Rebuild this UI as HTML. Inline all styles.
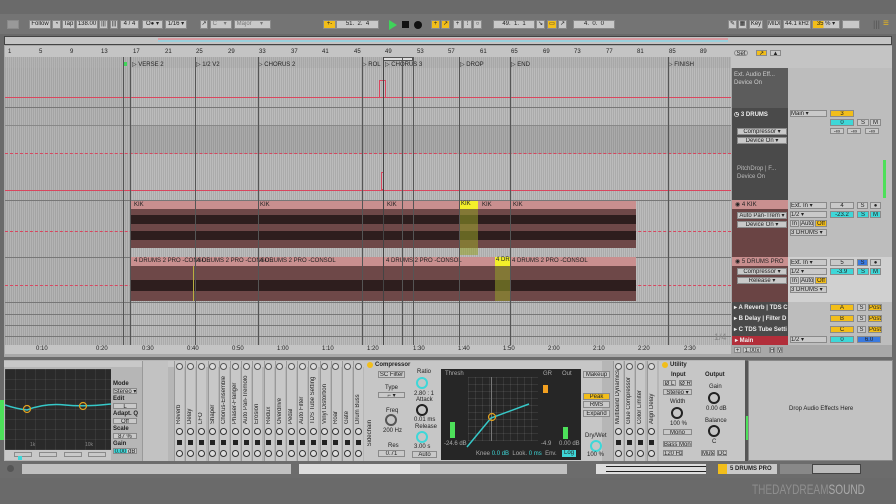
<!DOCTYPE html>
<html><head><meta charset="utf-8"><style>
*{margin:0;padding:0;box-sizing:border-box}
body{width:896px;height:504px;background:#6a6a6a;font-family:"Liberation Sans",sans-serif;font-size:6px;color:#222;position:relative;overflow:hidden}
.a{position:absolute}
.b{position:absolute;background:#c9c9c9;border:1px solid #8a8a8a;font-size:6px;line-height:7px;text-align:center;color:#222;white-space:nowrap;overflow:hidden}
.y{background:#f2be1a}
.c{background:#3ed7d8}
.t{position:absolute;font-size:6px;white-space:nowrap;color:#222}
.vt{position:absolute;writing-mode:vertical-rl;transform:rotate(180deg);font-size:6px;color:#222;white-space:nowrap}
.k{position:absolute;width:12px;height:12px;border-radius:50%;border:2px solid #222}
</style></head><body>
<!-- top toolbar -->
<div class="a" style="left:0;top:14px;width:896px;height:20px;background:#747474"></div>
<div class="b" style="left:7px;top:20px;width:12px;height:9px;background:#999"></div>
<div class="b" style="left:29px;top:20px;width:22px;height:9px">Follow</div>
<div class="b" style="left:52px;top:20px;width:9px;height:9px">◔</div>
<div class="b" style="left:62px;top:20px;width:13px;height:9px">Tap</div>
<div class="b" style="left:76px;top:20px;width:22px;height:9px">138.00</div>
<div class="b" style="left:99px;top:20px;width:9px;height:9px">|||</div>
<div class="b" style="left:110px;top:20px;width:8px;height:9px">|||</div>
<div class="b" style="left:120px;top:20px;width:19px;height:9px">4 / 4</div>
<div class="b" style="left:142px;top:20px;width:21px;height:9px">O● ▾</div>
<div class="b" style="left:165px;top:20px;width:22px;height:9px">1/16 ▾</div>
<div class="b" style="left:200px;top:20px;width:8px;height:9px">↗</div>
<div class="b" style="left:210px;top:20px;width:22px;height:9px;text-align:left;color:#777">&nbsp;C &nbsp;&nbsp;&nbsp;▾</div>
<div class="b" style="left:234px;top:20px;width:37px;height:9px;text-align:left;color:#777">&nbsp;Major &nbsp;&nbsp;&nbsp;&nbsp;▾</div>
<div class="b y" style="left:323px;top:20px;width:13px;height:9px">+-</div>
<div class="b" style="left:336px;top:20px;width:43px;height:9px">51. &nbsp;2. &nbsp;4</div>
<div class="a" style="left:389px;top:20px;width:0;height:0;border-left:8px solid #3fd45a;border-top:5px solid transparent;border-bottom:5px solid transparent"></div>
<div class="a" style="left:402px;top:21px;width:7px;height:7px;background:#111"></div>
<div class="a" style="left:414px;top:21px;width:8px;height:8px;border-radius:50%;background:#111"></div>
<div class="b y" style="left:431px;top:20px;width:9px;height:9px">+</div>
<div class="b y" style="left:441px;top:20px;width:9px;height:9px">↗</div>
<div class="b" style="left:453px;top:20px;width:9px;height:9px">+</div>
<div class="b" style="left:463px;top:20px;width:9px;height:9px">⁝</div>
<div class="b" style="left:473px;top:20px;width:9px;height:9px">○</div>
<div class="b" style="left:493px;top:20px;width:42px;height:9px">49. &nbsp;1. &nbsp;1</div>
<div class="b" style="left:536px;top:20px;width:9px;height:9px">↘</div>
<div class="b y" style="left:547px;top:20px;width:10px;height:9px">▭</div>
<div class="b" style="left:558px;top:20px;width:9px;height:9px">↗</div>
<div class="b" style="left:573px;top:20px;width:42px;height:9px">4. &nbsp;0. &nbsp;0</div>
<div class="b" style="left:728px;top:20px;width:9px;height:9px">✎</div>
<div class="b" style="left:738px;top:20px;width:9px;height:9px">▦</div>
<div class="b" style="left:749px;top:20px;width:14px;height:9px">Key</div>
<div class="b" style="left:767px;top:20px;width:14px;height:9px">MIDI</div>
<div class="b" style="left:783px;top:20px;width:28px;height:9px">44.1 kHz</div>
<div class="b" style="left:812px;top:20px;width:28px;height:9px;background:linear-gradient(90deg,#f2be1a 40%,#c9c9c9 40%)">35 % ▾</div>
<div class="b" style="left:842px;top:20px;width:18px;height:9px"></div>
<div class="t" style="left:873px;top:19px;font-size:9px;color:#555">|||</div>
<div class="t" style="left:883px;top:18px;font-size:10px;color:#e5b520">≡</div>
<!-- overview -->
<div class="a" style="left:4px;top:36px;width:888px;height:9px;background:#c4c4c4;border:1px solid #444"></div>
<div class="a" style="left:158px;top:38px;width:570px;height:2px;background:#d99aa0"></div>
<div class="a" style="left:158px;top:40px;width:570px;height:2px;background:#9ad0dc"></div>
<!-- main area -->
<div class="a" style="left:4px;top:45px;width:888px;height:312px;background:#a8a8a8"></div>
<!-- ruler -->
<div class="a" style="left:5px;top:46px;width:726px;height:11px;background:#c4c4c4"></div>
<div class="a" style="left:5px;top:57px;width:726px;height:11px;background:#b4b4b4 repeating-linear-gradient(90deg,rgba(0,0,0,.07) 0 1px,transparent 1px 2px)"></div>
<div class="t" style="left:8px;top:49px">1</div><div class="t" style="left:39px;top:49px">5</div><div class="t" style="left:70px;top:49px">9</div><div class="t" style="left:101px;top:49px">13</div><div class="t" style="left:133px;top:49px">17</div><div class="t" style="left:165px;top:49px">21</div><div class="t" style="left:196px;top:49px">25</div><div class="t" style="left:228px;top:49px">29</div><div class="t" style="left:259px;top:49px">33</div><div class="t" style="left:291px;top:49px">37</div><div class="t" style="left:322px;top:49px">41</div><div class="t" style="left:354px;top:49px">45</div><div class="t" style="left:385px;top:49px">49</div><div class="t" style="left:417px;top:49px">53</div><div class="t" style="left:448px;top:49px">57</div><div class="t" style="left:480px;top:49px">61</div><div class="t" style="left:511px;top:49px">65</div><div class="t" style="left:543px;top:49px">69</div><div class="t" style="left:574px;top:49px">73</div><div class="t" style="left:606px;top:49px">77</div><div class="t" style="left:637px;top:49px">81</div><div class="t" style="left:669px;top:49px">85</div><div class="t" style="left:700px;top:49px">89</div>
<div class="a" style="left:383px;top:57px;width:30px;height:4px;background:#ddd;border:1px solid #555"></div>
<div class="a" style="left:123px;top:62px;width:4px;height:4px;background:#3fd45a"></div>
<div class="t" style="left:132px;top:61px">▷ VERSE 2</div>
<div class="t" style="left:196px;top:61px">▷ 1/2 V2</div>
<div class="t" style="left:258px;top:61px">▷ CHORUS 2</div>
<div class="t" style="left:362px;top:61px">▷ ROL</div>
<div class="t" style="left:385px;top:61px">▷ CHORUS 3</div>
<div class="t" style="left:460px;top:61px">▷ DROP</div>
<div class="t" style="left:511px;top:61px">▷ END</div>
<div class="t" style="left:668px;top:61px">▷ FINISH</div>
<!-- arrangement -->
<div class="a" style="left:5px;top:68px;width:726px;height:277px;background:#bcbcbc repeating-linear-gradient(90deg,rgba(0,0,0,.09) 0 1px,transparent 1px 2px)"></div>
<div class="a" style="left:5px;top:68px;width:126px;height:277px;background:rgba(0,0,0,.04)"></div>
<div class="a" style="left:131px;top:125px;width:600px;height:29px;background:rgba(0,0,0,.09)"></div>
<div class="a" style="left:5px;top:107px;width:726px;height:1px;background:#777"></div>
<div class="a" style="left:5px;top:125px;width:726px;height:1px;background:#888"></div>
<div class="a" style="left:5px;top:200px;width:726px;height:1px;background:#777"></div>
<div class="a" style="left:5px;top:257px;width:726px;height:1px;background:#777"></div>
<div class="a" style="left:5px;top:302px;width:726px;height:1px;background:#777"></div>
<div class="a" style="left:5px;top:314px;width:726px;height:1px;background:#777"></div>
<div class="a" style="left:5px;top:325px;width:726px;height:1px;background:#777"></div>
<div class="a" style="left:5px;top:336px;width:726px;height:1px;background:#777"></div>
<div class="a" style="left:5px;top:97px;width:726px;height:1px;background:#d8465e"></div>
<div class="a" style="left:5px;top:153px;width:726px;height:0;border-top:1px dashed #d8465e"></div>
<div class="a" style="left:5px;top:190px;width:726px;height:1px;background:#d8465e"></div>
<div class="a" style="left:5px;top:231px;width:726px;height:0;border-top:1px dashed #d8465e"></div>
<div class="a" style="left:5px;top:285px;width:726px;height:0;border-top:1px dashed #d8465e"></div>
<div class="a" style="left:379px;top:80px;width:7px;height:18px;border:1px solid #d8465e;border-bottom:none"></div>
<div class="a" style="left:381px;top:172px;width:3px;height:18px;border:1px solid #d8465e"></div>
<!-- clips -->
<div class="a" style="left:131px;top:201px;width:505px;height:47px;background:#6e4848"></div>
<div class="a" style="left:131px;top:201px;width:505px;height:8px;background:#c98f8f"></div>
<div class="a" style="left:131px;top:215px;width:505px;height:9px;background:#2e1e1e"></div>
<div class="a" style="left:131px;top:231px;width:505px;height:9px;background:#2e1e1e"></div>
<div class="t" style="left:134px;top:202px">KIK</div><div class="t" style="left:260px;top:202px">KIK</div><div class="t" style="left:387px;top:202px">KIK</div><div class="t" style="left:482px;top:202px">KIK</div><div class="t" style="left:513px;top:202px">KIK</div>
<div class="a" style="left:459px;top:201px;width:19px;height:8px;background:#f3f02a;font-size:6px;padding-left:2px">KIK</div>
<div class="a" style="left:459px;top:209px;width:19px;height:46px;background:rgba(150,160,40,.55)"></div>
<div class="a" style="left:131px;top:257px;width:505px;height:44px;background:#6e4848"></div>
<div class="a" style="left:131px;top:257px;width:505px;height:9px;background:#c98f8f"></div>
<div class="a" style="left:131px;top:280px;width:505px;height:11px;background:#2e1e1e"></div>
<div class="t" style="left:134px;top:258px">4 DRUMS 2 PRO -CONSOL</div><div class="t" style="left:197px;top:258px">4 DRUMS 2 PRO -CONSOL</div><div class="t" style="left:260px;top:258px">4 DRUMS 2 PRO -CONSOL</div><div class="t" style="left:386px;top:258px">4 DRUMS 2 PRO -CONSOL</div><div class="t" style="left:512px;top:258px">4 DRUMS 2 PRO -CONSOL</div>
<div class="a" style="left:495px;top:257px;width:15px;height:9px;background:#f3f02a;font-size:6px;padding-left:1px">4 DR</div>
<div class="a" style="left:495px;top:266px;width:15px;height:35px;background:rgba(150,160,40,.55)"></div>
<div class="a" style="left:193px;top:266px;width:1px;height:35px;background:#b8b040"></div>
<!-- vertical markers -->
<div class="a" style="left:123px;top:57px;width:1px;height:288px;background:#555"></div>
<div class="a" style="left:130px;top:57px;width:1px;height:288px;background:#555"></div>
<div class="a" style="left:195px;top:57px;width:1px;height:288px;background:#555"></div>
<div class="a" style="left:258px;top:57px;width:1px;height:288px;background:#555"></div>
<div class="a" style="left:362px;top:57px;width:1px;height:288px;background:#555"></div>
<div class="a" style="left:383px;top:57px;width:1px;height:288px;background:#444"></div>
<div class="a" style="left:402px;top:57px;width:1px;height:288px;background:#555"></div>
<div class="a" style="left:413px;top:57px;width:1px;height:288px;background:#555"></div>
<div class="a" style="left:459px;top:57px;width:1px;height:288px;background:#555"></div>
<div class="a" style="left:510px;top:57px;width:1px;height:288px;background:#555"></div>
<div class="a" style="left:668px;top:57px;width:1px;height:288px;background:#555"></div>
<div class="t" style="left:714px;top:332px;font-size:9px;color:#888">1/4</div>
<!-- time ruler -->
<div class="a" style="left:5px;top:345px;width:726px;height:9px;background:#c4c4c4"></div>
<div class="t" style="left:36px;top:346px">0:10</div><div class="t" style="left:96px;top:346px">0:20</div><div class="t" style="left:142px;top:346px">0:30</div><div class="t" style="left:187px;top:346px">0:40</div><div class="t" style="left:232px;top:346px">0:50</div><div class="t" style="left:277px;top:346px">1:00</div><div class="t" style="left:322px;top:346px">1:10</div><div class="t" style="left:367px;top:346px">1:20</div><div class="t" style="left:413px;top:346px">1:30</div><div class="t" style="left:458px;top:346px">1:40</div><div class="t" style="left:503px;top:346px">1:50</div><div class="t" style="left:548px;top:346px">2:00</div><div class="t" style="left:593px;top:346px">2:10</div><div class="t" style="left:638px;top:346px">2:20</div><div class="t" style="left:684px;top:346px">2:30</div>
<!-- right side header -->
<div class="a" style="left:731px;top:46px;width:161px;height:22px;background:#c4c4c4"></div>
<div class="b" style="left:734px;top:50px;width:14px;height:6px;border-radius:3px">Set</div>
<div class="b y" style="left:756px;top:50px;width:11px;height:6px">↗</div>
<div class="b" style="left:770px;top:50px;width:11px;height:6px">▲</div>
<!-- track headers -->
<div class="a" style="left:732px;top:68px;width:56px;height:40px;background:#5c5c5c"></div>
<div class="t" style="left:734px;top:72px;color:#ccc">Ext. Audio Eff...</div>
<div class="t" style="left:734px;top:80px;color:#ccc">Device On</div>
<div class="a" style="left:788px;top:68px;width:104px;height:40px;background:#bdbdbd"></div>
<div class="a" style="left:732px;top:108px;width:56px;height:92px;background:#4a4a4a"></div>
<div class="t" style="left:734px;top:111px;color:#eee;font-weight:bold">◷ 3 DRUMS</div>
<div class="b" style="left:737px;top:128px;width:50px;height:7px">Compressor ▾</div>
<div class="b" style="left:737px;top:137px;width:50px;height:7px">Device On ▾</div>
<div class="t" style="left:737px;top:166px;color:#bbb">PitchDrop | F...</div>
<div class="t" style="left:737px;top:174px;color:#bbb">Device On</div>
<div class="a" style="left:788px;top:108px;width:104px;height:92px;background:#bdbdbd"></div>
<div class="b" style="left:790px;top:110px;width:37px;height:7px;text-align:left">Main ▾</div>
<div class="b y" style="left:830px;top:110px;width:24px;height:7px">3</div>
<div class="b c" style="left:830px;top:119px;width:24px;height:7px">0</div>
<div class="b" style="left:857px;top:119px;width:12px;height:7px">S</div>
<div class="b" style="left:870px;top:119px;width:11px;height:7px">M</div>
<div class="b" style="left:830px;top:128px;width:14px;height:6px">-∞</div>
<div class="b" style="left:847px;top:128px;width:14px;height:6px">-∞</div>
<div class="b" style="left:865px;top:128px;width:14px;height:6px">-∞</div>
<div class="a" style="left:883px;top:160px;width:3px;height:38px;background:#4de05a"></div>
<!-- 4 KIK -->
<div class="a" style="left:732px;top:200px;width:56px;height:57px;background:#6a4444"></div>
<div class="a" style="left:732px;top:200px;width:56px;height:9px;background:#c98f8f;font-size:6px;padding:1px 3px">◉ 4 KIK</div>
<div class="b" style="left:737px;top:212px;width:50px;height:7px">Auto Pan-Trem ▾</div>
<div class="b" style="left:737px;top:221px;width:50px;height:7px">Device On ▾</div>
<div class="a" style="left:788px;top:200px;width:104px;height:57px;background:#bdbdbd"></div>
<div class="b" style="left:790px;top:202px;width:37px;height:7px;text-align:left">Ext. In ▾</div>
<div class="b" style="left:790px;top:211px;width:37px;height:7px;text-align:left">1/2 ▾</div>
<div class="b" style="left:790px;top:220px;width:9px;height:7px">In</div><div class="b" style="left:800px;top:220px;width:14px;height:7px">Auto</div><div class="b y" style="left:815px;top:220px;width:12px;height:7px">Off</div>
<div class="b" style="left:790px;top:229px;width:37px;height:7px;text-align:left">3 DRUMS ▾</div>
<div class="b" style="left:830px;top:202px;width:24px;height:7px">4</div>
<div class="b" style="left:857px;top:202px;width:11px;height:7px">S</div>
<div class="b" style="left:870px;top:202px;width:11px;height:7px">●</div>
<div class="b c" style="left:830px;top:211px;width:24px;height:7px">-23.2</div>
<div class="b c" style="left:857px;top:211px;width:12px;height:7px">S</div>
<div class="b c" style="left:870px;top:211px;width:11px;height:7px">M</div>
<!-- 5 DRUMS PRO -->
<div class="a" style="left:732px;top:257px;width:56px;height:45px;background:#6a4444"></div>
<div class="a" style="left:732px;top:257px;width:56px;height:9px;background:#c98f8f;font-size:6px;padding:1px 3px">◉ 5 DRUMS PRO</div>
<div class="b" style="left:737px;top:268px;width:50px;height:7px">Compressor ▾</div>
<div class="b" style="left:737px;top:277px;width:50px;height:7px">Release ▾</div>
<div class="a" style="left:788px;top:257px;width:104px;height:45px;background:#d0d0d0"></div>
<div class="b" style="left:790px;top:259px;width:37px;height:7px;text-align:left">Ext. In ▾</div>
<div class="b" style="left:790px;top:268px;width:37px;height:7px;text-align:left">1/2 ▾</div>
<div class="b" style="left:790px;top:277px;width:9px;height:7px">In</div><div class="b" style="left:800px;top:277px;width:14px;height:7px">Auto</div><div class="b y" style="left:815px;top:277px;width:12px;height:7px">Off</div>
<div class="b" style="left:790px;top:286px;width:37px;height:7px;text-align:left">3 DRUMS ▾</div>
<div class="b" style="left:830px;top:259px;width:24px;height:7px">5</div>
<div class="b" style="left:857px;top:259px;width:11px;height:7px;background:#3a7ae0">S</div>
<div class="b" style="left:870px;top:259px;width:11px;height:7px">●</div>
<div class="b c" style="left:830px;top:268px;width:24px;height:7px">-3.9</div>
<div class="b c" style="left:857px;top:268px;width:12px;height:7px">S</div>
<div class="b c" style="left:870px;top:268px;width:11px;height:7px">M</div>
<!-- returns -->
<div class="a" style="left:732px;top:302px;width:56px;height:34px;background:#4a4a4a"></div>
<div class="t" style="left:734px;top:304px;color:#eee;font-weight:bold">▸ A Reverb | TDS C</div>
<div class="t" style="left:734px;top:315px;color:#eee;font-weight:bold">▸ B Delay | Filter D</div>
<div class="t" style="left:734px;top:326px;color:#eee;font-weight:bold">▸ C TDS Tube Setti</div>
<div class="a" style="left:732px;top:336px;width:56px;height:9px;background:#b22e3a;color:#eee;font-weight:bold;padding:1px 3px">▸ Main</div>
<div class="a" style="left:788px;top:302px;width:104px;height:43px;background:#bdbdbd"></div>
<div class="b y" style="left:830px;top:304px;width:24px;height:7px">A</div><div class="b" style="left:857px;top:304px;width:9px;height:7px">S</div><div class="b y" style="left:868px;top:304px;width:14px;height:7px">Post</div>
<div class="b y" style="left:830px;top:315px;width:24px;height:7px">B</div><div class="b" style="left:857px;top:315px;width:9px;height:7px">S</div><div class="b y" style="left:868px;top:315px;width:14px;height:7px">Post</div>
<div class="b y" style="left:830px;top:326px;width:24px;height:7px">C</div><div class="b" style="left:857px;top:326px;width:9px;height:7px">S</div><div class="b y" style="left:868px;top:326px;width:14px;height:7px">Post</div>
<div class="b" style="left:790px;top:336px;width:37px;height:7px;text-align:left">1/2 ▾</div>
<div class="b c" style="left:830px;top:336px;width:24px;height:7px">0</div>
<div class="b" style="left:857px;top:336px;width:24px;height:7px;background:#3a7ae0">6.0</div>
<div class="b" style="left:734px;top:347px;width:7px;height:6px">+</div>
<div class="b" style="left:743px;top:347px;width:18px;height:6px">1.00x</div>
<div class="b" style="left:769px;top:347px;width:6px;height:6px">H</div>
<div class="b" style="left:777px;top:347px;width:6px;height:6px">W</div>
<!-- device panel -->
<div class="a" style="left:4px;top:360px;width:741px;height:103px;background:#b6b6b6"></div>
<div class="a" style="left:4px;top:361px;width:420px;height:6px;background:#c8c8c8"></div>
<!-- EQ -->
<div class="a" style="left:5px;top:369px;width:106px;height:81px;background:#2a2a2a;background-image:linear-gradient(90deg,rgba(255,255,255,.06) 1px,transparent 1px),linear-gradient(rgba(255,255,255,.06) 1px,transparent 1px);background-size:10px 10px"></div>
<div class="a" style="left:0;top:400px;width:4px;height:40px;background:#4de05a"></div>
<svg class="a" style="left:5px;top:369px" width="106" height="81"><path d="M0 36 Q12 40 22 41 Q40 34 60 36 Q80 38 106 35" fill="none" stroke="#36c8c8" stroke-width="1.5"/><circle cx="22" cy="40" r="3.5" fill="none" stroke="#e0a020" stroke-width="1.2"/><circle cx="78" cy="37" r="3.5" fill="none" stroke="#e0a020" stroke-width="1.2"/><text x="25" y="77" font-size="5" fill="#888" font-family="Liberation Sans">1k</text><text x="80" y="77" font-size="5" fill="#888" font-family="Liberation Sans">10k</text></svg>
<div class="a" style="left:5px;top:450px;width:106px;height:10px;background:#c8c8c8"></div>
<div class="b" style="left:14px;top:452px;width:18px;height:5px"></div><div class="b" style="left:39px;top:452px;width:18px;height:5px"></div><div class="b" style="left:64px;top:452px;width:18px;height:5px"></div><div class="b" style="left:88px;top:452px;width:18px;height:5px"></div>
<div class="a" style="left:18px;top:456px;width:4px;height:4px;background:#3ed7d8"></div>
<div class="t" style="left:113px;top:381px;font-weight:bold">Mode</div>
<div class="b" style="left:113px;top:388px;width:24px;height:6px">Stereo ▾</div>
<div class="t" style="left:113px;top:396px;font-weight:bold">Edit</div>
<div class="b" style="left:113px;top:403px;width:24px;height:6px">L</div>
<div class="t" style="left:113px;top:411px;font-weight:bold">Adapt. Q</div>
<div class="b" style="left:113px;top:418px;width:24px;height:6px">Off</div>
<div class="t" style="left:113px;top:426px;font-weight:bold">Scale</div>
<div class="b" style="left:113px;top:433px;width:24px;height:6px">87 %</div>
<div class="t" style="left:113px;top:441px;font-weight:bold">Gain</div>
<div class="b" style="left:113px;top:448px;width:24px;height:6px;background:linear-gradient(90deg,#3ed7d8 60%,#c9c9c9 60%)">0.00 dB</div>
<!-- chain strips -->
<div class="a" style="left:142px;top:361px;width:26px;height:100px;background:#c2c2c2;border-left:1px solid #999"></div>
<div id="strips"></div>
<!-- compressor -->
<div class="a" style="left:364px;top:361px;width:238px;height:100px;background:#c6c6c6"></div>
<div class="a" style="left:367px;top:362px;width:6px;height:6px;border-radius:50%;background:#f2be1a"></div>
<div class="t" style="left:375px;top:362px;font-weight:bold">Compressor</div>
<div class="b" style="left:378px;top:371px;width:27px;height:7px">SC Filter</div>
<div class="vt" style="left:367px;top:420px">Sidechain</div>
<div class="t" style="left:385px;top:385px">Type</div>
<div class="b" style="left:378px;top:392px;width:27px;height:6px">⌐ ▾</div>
<div class="t" style="left:386px;top:408px">Freq</div>
<div class="k" style="left:385px;top:414px;border-color:#555"></div>
<div class="t" style="left:383px;top:428px">200 Hz</div>
<div class="t" style="left:388px;top:443px">Res</div>
<div class="b" style="left:378px;top:450px;width:27px;height:7px">0.71</div>
<div class="t" style="left:417px;top:369px">Ratio</div>
<div class="k" style="left:416px;top:377px;border-color:#3ed7d8"></div>
<div class="t" style="left:414px;top:391px">2.80 : 1</div>
<div class="t" style="left:416px;top:397px">Attack</div>
<div class="k" style="left:416px;top:404px"></div>
<div class="t" style="left:414px;top:417px">0.01 ms</div>
<div class="t" style="left:415px;top:424px">Release</div>
<div class="k" style="left:416px;top:431px;border-color:#3ed7d8"></div>
<div class="t" style="left:414px;top:444px">3.00 s</div>
<div class="b" style="left:412px;top:451px;width:25px;height:7px">Auto</div>
<div class="a" style="left:441px;top:369px;width:140px;height:91px;background:#262626"></div>
<div class="t" style="left:445px;top:371px;color:#aaa">Thresh</div>
<div class="t" style="left:543px;top:371px;color:#aaa">GR</div>
<div class="t" style="left:562px;top:371px;color:#aaa">Out</div>
<div class="a" style="left:468px;top:377px;width:70px;height:64px;background-image:linear-gradient(90deg,rgba(255,255,255,.08) 1px,transparent 1px),linear-gradient(rgba(255,255,255,.08) 1px,transparent 1px);background-size:7px 7px"></div>
<div class="a" style="left:491px;top:377px;width:1px;height:64px;background:#777"></div>
<svg class="a" style="left:441px;top:369px" width="140" height="91"><path d="M26 78 L50 49 L88 35" fill="none" stroke="#36c8c8" stroke-width="1.5"/><circle cx="51" cy="48" r="3.5" fill="none" stroke="#e0a020" stroke-width="1.2"/></svg>
<div class="a" style="left:450px;top:422px;width:5px;height:16px;background:#4de05a"></div>
<div class="a" style="left:543px;top:385px;width:5px;height:8px;background:#f2a020"></div>
<div class="a" style="left:563px;top:427px;width:5px;height:12px;background:#4de05a"></div>
<div class="t" style="left:444px;top:441px;color:#aaa">-24.6 dB</div>
<div class="t" style="left:541px;top:441px;color:#aaa">-4.9</div>
<div class="t" style="left:559px;top:441px;color:#aaa">0.00 dB</div>
<div class="t" style="left:476px;top:451px;color:#aaa">Knee <span style="color:#3ed7d8">0.0 dB</span> &nbsp;Look. <span style="color:#3ed7d8">0 ms</span> &nbsp;Env. </div>
<div class="a" style="left:562px;top:450px;width:14px;height:7px;background:#3ed7d8;font-size:6px;text-align:center">Log</div>
<div class="b" style="left:583px;top:371px;width:27px;height:7px">Makeup</div>
<div class="b y" style="left:583px;top:393px;width:27px;height:7px">Peak</div>
<div class="b" style="left:583px;top:401px;width:27px;height:7px">RMS</div>
<div class="b" style="left:583px;top:410px;width:27px;height:7px">Expand</div>
<div class="t" style="left:585px;top:433px">Dry/Wet</div>
<div class="k" style="left:590px;top:440px;border-color:#3ed7d8"></div>
<div class="t" style="left:587px;top:452px">100 %</div>
<!-- utility -->
<div class="a" style="left:659px;top:361px;width:86px;height:100px;background:#c6c6c6"></div>
<div class="a" style="left:662px;top:362px;width:6px;height:6px;border-radius:50%;background:#f2be1a"></div>
<div class="t" style="left:670px;top:362px;font-weight:bold">Utility</div>
<div class="t" style="left:671px;top:372px;font-weight:bold">Input</div>
<div class="t" style="left:705px;top:372px;font-weight:bold">Output</div>
<div class="b" style="left:663px;top:380px;width:13px;height:6px">Ø L</div><div class="b" style="left:679px;top:380px;width:13px;height:6px">Ø R</div>
<div class="b" style="left:663px;top:389px;width:29px;height:6px">Stereo ▾</div>
<div class="t" style="left:670px;top:399px">Width</div>
<div class="k" style="left:671px;top:407px"></div>
<div class="t" style="left:670px;top:421px">100 %</div>
<div class="b" style="left:663px;top:429px;width:29px;height:6px">Mono</div>
<div class="b" style="left:663px;top:441px;width:29px;height:6px">Bass Mono</div>
<div class="b" style="left:663px;top:450px;width:20px;height:6px">120 Hz</div>
<div class="t" style="left:709px;top:384px">Gain</div>
<div class="k" style="left:708px;top:392px"></div>
<div class="t" style="left:706px;top:406px">0.00 dB</div>
<div class="t" style="left:705px;top:418px">Balance</div>
<div class="k" style="left:708px;top:425px"></div>
<div class="t" style="left:712px;top:439px">C</div>
<div class="b" style="left:701px;top:450px;width:14px;height:6px">Mute</div>
<div class="b" style="left:717px;top:450px;width:10px;height:6px">DC</div>
<div class="a" style="left:745px;top:361px;width:5px;height:100px;background:#555"></div>
<div class="a" style="left:746px;top:416px;width:3px;height:24px;background:#4de05a"></div>
<div class="a" style="left:748px;top:360px;width:145px;height:101px;background:#c2c2c2;border:1px solid #888"></div>
<div class="t" style="left:789px;top:406px">Drop Audio Effects Here</div>
<!-- status bar -->
<div class="a" style="left:0;top:461px;width:896px;height:17px;background:#6c6c6c"></div>
<div class="a" style="left:7px;top:465px;width:7px;height:7px;border-radius:50%;background:#555"></div>
<div class="a" style="left:22px;top:464px;width:123px;height:10px;background:#c0c0c0"></div>
<div class="a" style="left:145px;top:464px;width:146px;height:10px;background:#c0c0c0"></div>
<div class="a" style="left:299px;top:464px;width:121px;height:10px;background:#ddd"></div>
<div class="a" style="left:420px;top:464px;width:147px;height:10px;background:#c0c0c0"></div>
<div class="a" style="left:596px;top:464px;width:110px;height:10px;background:#ddd"></div>
<div class="a" style="left:606px;top:466px;width:100px;height:1px;background:#222"></div>
<div class="a" style="left:606px;top:471px;width:100px;height:1px;background:#222"></div>
<div class="a" style="left:718px;top:464px;width:9px;height:10px;background:#f2be1a"></div>
<div class="a" style="left:727px;top:464px;width:50px;height:10px;background:#c9c9c9;font-size:6px;font-weight:bold;padding:2px 3px;white-space:nowrap">5 DRUMS PRO</div>
<div class="a" style="left:780px;top:464px;width:32px;height:10px;background:#888"></div>
<div class="a" style="left:812px;top:464px;width:49px;height:10px;background:#bbb;border:1px solid #444"></div>
<div class="t" style="left:752px;top:481px;font-size:14px;color:#8a8a8a;transform:scaleX(0.72);transform-origin:left top">THE<span style="color:#8f8f8f">DAYDREAM</span><span style="color:#aaa">SOUND</span></div>
<script>
var n=["Reverb","Delay","LFO","Shaper","Chorus-Ensemble","Phaser-Flanger","Auto Pan-Tremolo","Erosion","Redux","Overdrive","Pedal","Auto Filter","TDS Tube Setting","Vinyl Distortion","Roar","Gate","Drum Buss"],h="";
function strip(x,s){return '<div class="a" style="left:'+x+'px;top:361px;width:10px;height:100px;background:#c8c8c8;border-left:1px solid #999"></div><div class="a" style="left:'+(x+1.5)+'px;top:363px;width:7px;height:7px;border-radius:50%;border:1px solid #555;background:#ddd"></div><div class="vt" style="left:'+(x+2)+'px;top:372px;height:52px;text-align:left">'+s+'</div><div class="a" style="left:'+(x+1.5)+'px;top:428px;width:7px;height:7px;border-radius:50%;border:1px solid #333;background:#ddd"></div><div class="a" style="left:'+(x+2.5)+'px;top:440px;width:5px;height:5px;background:#222"></div><div class="a" style="left:'+(x+1.5)+'px;top:450px;width:7px;height:7px;border-radius:50%;border:1px solid #333;background:#ddd"></div>';}
n.forEach(function(s,i){h+=strip(174+i*11.2,s);});
["Multiband Dynamics","Glue Compressor","Color Limiter","Align Delay"].forEach(function(s,i){h+=strip(613+i*11.2,s);});
document.getElementById("strips").innerHTML=h;
</script>
</body></html>
